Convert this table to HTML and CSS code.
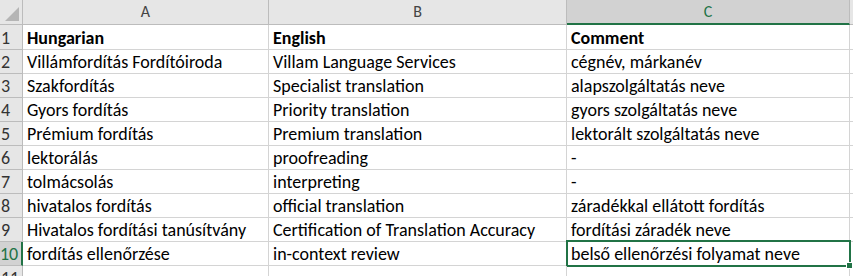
FILE: index.html
```html
<!DOCTYPE html>
<html>
<head>
<meta charset="utf-8">
<link rel="stylesheet" href="styles.css">
</head>
<body>
<div class="sheet">
  <div class="corner"><span class="tri"></span></div>
  <div class="colhdr">A</div>
  <div class="colhdr">B</div>
  <div class="colhdr sel">C</div>
  <div class="colhdr last"></div>

  <div class="rowhdr r1">1</div>
  <div class="cell r1 b">Hungarian</div>
  <div class="cell r1 b">English</div>
  <div class="cell r1 b">Comment</div>
  <div class="cell r1 last"></div>

  <div class="rowhdr">2</div>
  <div class="cell">Villámfordítás Fordítóiroda</div>
  <div class="cell">Villam Language Services</div>
  <div class="cell">cégnév, márkanév</div>
  <div class="cell last"></div>

  <div class="rowhdr">3</div>
  <div class="cell">Szakfordítás</div>
  <div class="cell">Specialist translation</div>
  <div class="cell">alapszolgáltatás neve</div>
  <div class="cell last"></div>

  <div class="rowhdr">4</div>
  <div class="cell">Gyors fordítás</div>
  <div class="cell">Priority translation</div>
  <div class="cell">gyors szolgáltatás neve</div>
  <div class="cell last"></div>

  <div class="rowhdr">5</div>
  <div class="cell">Prémium fordítás</div>
  <div class="cell">Premium translation</div>
  <div class="cell">lektorált szolgáltatás neve</div>
  <div class="cell last"></div>

  <div class="rowhdr">6</div>
  <div class="cell">lektorálás</div>
  <div class="cell">proofreading</div>
  <div class="cell">-</div>
  <div class="cell last"></div>

  <div class="rowhdr">7</div>
  <div class="cell">tolmácsolás</div>
  <div class="cell">interpreting</div>
  <div class="cell">-</div>
  <div class="cell last"></div>

  <div class="rowhdr">8</div>
  <div class="cell">hivatalos fordítás</div>
  <div class="cell">official translation</div>
  <div class="cell">záradékkal ellátott fordítás</div>
  <div class="cell last"></div>

  <div class="rowhdr">9</div>
  <div class="cell">Hivatalos fordítási tanúsítvány</div>
  <div class="cell">Certification of Translation Accuracy</div>
  <div class="cell">fordítási záradék neve</div>
  <div class="cell last"></div>

  <div class="rowhdr sel">10</div>
  <div class="cell">fordítás ellenőrzése</div>
  <div class="cell">in-context review</div>
  <div class="cell active">belső ellenőrzési folyamat neve<span class="handle"></span></div>
  <div class="cell last"></div>

  <div class="rowhdr">11</div>
  <div class="cell"></div>
  <div class="cell"></div>
  <div class="cell"></div>
  <div class="cell last"></div>
</div>
</body>
</html>
```

FILE: styles.css
```css
html, body {
  margin: 0;
  padding: 0;
  background: #ffffff;
  overflow: hidden;
}

.sheet {
  display: grid;
  grid-template-columns: 23px 246px 298px 283px 20px;
  grid-template-rows: 25px 25px repeat(10, 24px);
  font-family: Carlito, "Open Sans", sans-serif;
  color: #000;
}

.corner {
  background: #e6e6e6;
  border-right: 1px solid #bcbcbc;
  border-bottom: 1px solid #bcbcbc;
  position: relative;
}
.corner .tri {
  position: absolute;
  right: 3px;
  bottom: 3px;
  width: 0;
  height: 0;
  border-left: 14px solid transparent;
  border-bottom: 14px solid #b5b5b5;
}

.colhdr {
  background: #e6e6e6;
  border-right: 1px solid #bcbcbc;
  border-bottom: 1px solid #bcbcbc;
  color: #444;
  font-size: 16px;
  text-align: center;
  line-height: 24px;
}
.colhdr.sel {
  background: #d2d2d2;
  color: #217346;
  border-bottom: 2px solid #217346;
  line-height: 23px;
}
.colhdr.last { border-right: none; }

.rowhdr {
  background: #e6e6e6;
  border-right: 1px solid #bcbcbc;
  border-bottom: 1px solid #bcbcbc;
  color: #333;
  font-size: 18px;
  padding-left: 1px;
  display: flex;
  align-items: flex-end;
  padding-bottom: 1px;
  line-height: 20px;
  white-space: nowrap;
  overflow: hidden;
}
.rowhdr.sel {
  background: #d2d2d2;
  border-right: 2px solid #217346;
  color: #217346;
  padding-left: 0;
}

.cell {
  border-right: 1px solid #d4d4d4;
  border-bottom: 1px solid #d4d4d4;
  font-size: 18px;
  padding-left: 4px;
  display: flex;
  align-items: flex-end;
  padding-bottom: 1px;
  line-height: 20px;
  white-space: nowrap;
  position: relative;
}
.cell.b { font-weight: bold; }
.cell.last { border-right: none; }

.cell.active::after {
  content: "";
  position: absolute;
  left: -1px;
  top: -2px;
  right: -2px;
  bottom: -2px;
  border: 2px solid #217346;
}
.handle {
  position: absolute;
  right: -4px;
  bottom: -4px;
  width: 5px;
  height: 5px;
  background: #217346;
  border: 1px solid #fff;
  z-index: 2;
}
```
